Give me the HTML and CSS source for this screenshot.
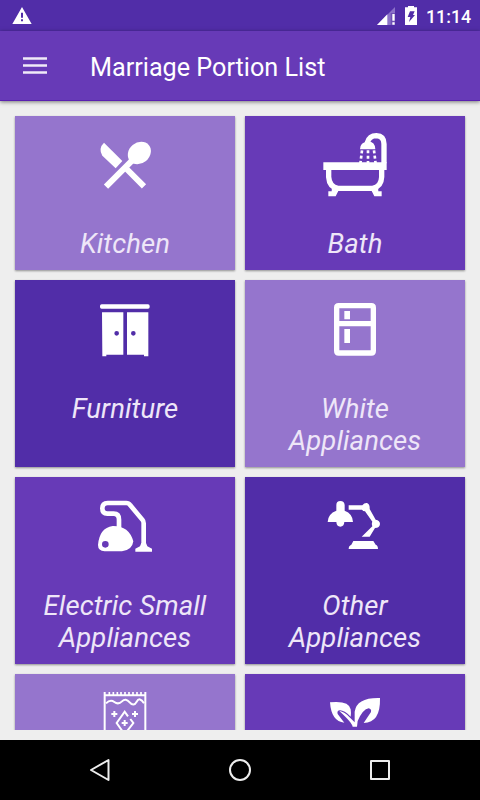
FILE: index.html
```html
<!DOCTYPE html>
<html lang="en">
<head>
<meta charset="utf-8">
<title>Marriage Portion List</title>
<link rel="stylesheet" href="styles.css">
</head>
<body>
<div class="screen">
  <div class="status">
    <svg class="warn" width="20" height="18" viewBox="0 0 60 54"><path fill="#fff" fill-rule="evenodd" d="M30 0 59 51H1ZM27 17v15h6V17ZM27 37v6h6v-6Z"/></svg>
    <svg width="18" height="18" viewBox="0 0 54 54"><path d="M54 0V54H0Z" fill="#8b70c8"/><path d="M31 22V54H0Z" fill="#fff"/><path d="M41 18h13v36H41z" fill="#6e4fb5"/><path d="M46 21h7v20h-7zM46 46h7v7h-7z" fill="#fff"/></svg>
    <svg class="battery" width="12" height="19" viewBox="0 0 36 57"><path fill="#fff" d="M9 0h18v4h9v53H0V4h9z"/><path fill="#512da8" d="M15 16h14l-5 11h6L12 48l4-15H8z"/></svg>
    <span class="clock">11:14</span>
  </div>
  <header class="appbar">
    <svg width="24" height="18" viewBox="0 0 24 18"><path d="M0 1.5h24M0 8.5h24M0 15.5h24" stroke="#f0eaf8" stroke-width="2.4"/></svg>
    <h1>Marriage Portion List</h1>
  </header>
  <main class="grid">
    <section class="card light">
      <svg viewBox="0 0 270 240"><path d="M72 68 127 123 107 145 67 107Q54 85 72 68Z"/><path d="M78 200 156 122M134 141 192 199" fill="none" stroke="#fff" stroke-width="18"/><ellipse cx="178" cy="99" rx="37" ry="31" transform="rotate(-40 178 99)"/></svg>
      <h2 class="short">Kitchen</h2>
    </section>
    <section class="card mid">
      <svg viewBox="0 0 270 240"><path d="M40 127h190v23H40zM150 88q0-21 24-24 22 2 22 24z"/><path d="M172 68Q178 47 199 47 222 48 222 72V130M56 150V171Q58 201 84 205H188Q214 200 215 171V150" fill="none" stroke="#fff" stroke-width="16"/><path d="M66 199 86 211 77 229H55V214H65ZM204 199 184 211 193 229H215V214H205Z"/><path d="M156 91 151 132M174 91v41M192 91 197 132" fill="none" stroke="#fff" stroke-width="8" stroke-dasharray="9 7"/></svg>
      <h2 class="short">Bath</h2>
    </section>
    <section class="card dark">
      <svg viewBox="0 -18 270 240"><rect x="60" y="43" width="149" height="13" rx="5"/><path fill-rule="evenodd" d="M66 67H130V194H79V199H67ZM141 67H205V199H192V194H141ZM103 130a7 7 0 1 0 14 0 7 7 0 1 0-14 0ZM153 130a7 7 0 1 0 14 0 7 7 0 1 0-14 0Z"/></svg>
      <h2>Furniture</h2>
    </section>
    <section class="card light">
      <svg viewBox="0 -18 270 240"><path fill-rule="evenodd" d="M86 39H184Q198 39 198 53V182Q198 197 184 197H86Q72 197 72 182V53Q72 39 86 39ZM88 55V93H182V55ZM88 109V181H182V109Z"/><path d="M103 63h17v25h-17zM103 117h17v42h-17z"/></svg>
      <h2>White<br>Appliances</h2>
    </section>
    <section class="card mid">
      <svg viewBox="0 -12 270 240"><path d="M117 130V104Q117 86 101 86H82Q67 86 67 70T83 54H139Q146 54 151 61L187 104Q191 108 191 115V182" fill="none" stroke="#fff" stroke-width="14"/><path fill-rule="evenodd" d="M54 180Q58 129 98 123 147 122 160 169 157 195 126 199H74Q54 198 54 180ZM66 178a10 10 0 1 0 20 0 10 10 0 1 0-20 0Z"/><path d="M184 174H198L202 184 216 191V200H166V191L180 184Z"/></svg>
      <h2>Electric Small<br>Appliances</h2>
    </section>
    <section class="card dark">
      <svg viewBox="0 -12 270 240"><path d="M79 60Q79 48 91 48T104 60V77Q128 86 129 111H103Q102 125 91 125T79 111H53Q54 86 79 77ZM116 61H157Q163 53 171 54 180 57 179 72L197 104Q210 106 210 117 209 129 195 129L179 155H155L187 124Q184 116 187 110L165 79Q159 79 156 74H116ZM130 168H190L197 179Q204 181 204 192H116Q116 182 124 179Z"/></svg>
      <h2>Other<br>Appliances</h2>
    </section>
    <section class="card light">
      <svg viewBox="0 54 270 240"><g fill="none" stroke="#fff"><path d="M74 96V300M196 96V300M74 106H196" stroke-width="6"/><path d="M88 96v10M100 96v10M112 96v10M123 96v10M135 96v10M147 96v10M159 96v10M171 96v10M183 96v10" stroke-width="5"/><path d="M78 130Q91 117 103 126T126 124 149 127 170 125 192 130M144 169 134 155 110 189 134 223 160 189 151 177M103 153v18M94 162h18M165 153v18M156 162h18M134 180v18M125 189h18" stroke-width="6"/></g></svg>
    </section>
    <section class="card mid">
      <svg viewBox="0 54 270 240"><path d="M60 127Q117 121 122 148 124 161 122 170 103 151 90 151 80 152 83 162L103 188Q64 185 60 127ZM210 114Q212 188 161 189L183 156Q185 147 176 145 159 147 143 183L141 200H128Q126 188 88 153 96 153 111 164L134 187V155Q140 112 210 114Z"/></svg>
    </section>
  </main>
  <nav class="navbar">
    <svg width="24" height="26" viewBox="0 0 24 26"><path d="M3 13 20.5 3V23Z"/></svg>
    <svg width="24" height="26" viewBox="0 0 24 26"><circle cx="12" cy="13" r="10"/></svg>
    <svg width="24" height="26" viewBox="0 0 24 26"><rect x="3" y="4" width="18" height="18"/></svg>
  </nav>
</div>
</body>
</html>
```
FILE: styles.css
```css
* { box-sizing: border-box; }
body { margin: 0; font-family: Roboto, sans-serif; color: #fff; }
.screen { width: 480px; height: 800px; display: flex; flex-direction: column; background: #eee; overflow: hidden; }
svg { display: block; flex: none; }
.status { height: 31px; flex: none; background: #512da8; display: flex; align-items: center; padding: 0 10px 0 12px; }
.warn { margin-right: auto; }
.battery { margin: 0 9px 0 10px; }
.clock { font-size: 17.8px; line-height: 31px; font-weight: 500; padding-top: 2px; width: 44px; white-space: nowrap; }
.appbar { height: 70px; flex: none; display: flex; align-items: center; padding-left: 23px; gap: 43px; background: #673ab7; border-bottom: 1px solid #5a20b0; box-shadow: 0 1px 4px rgba(0,0,0,.5); z-index: 1; }
h1 { margin: 5px 0 0; font-size: 25.2px; line-height: 32px; font-weight: 400; white-space: nowrap; }
.grid { height: 629px; flex: none; padding: 15px 15px 0; display: grid; grid-template-columns: 220px 220px; grid-template-rows: 154px 187px 187px 187px; gap: 10px; overflow: hidden; }
.card { display: flex; flex-direction: column; align-items: center; padding-top: 4px; box-shadow: 0 1px 2px rgba(0,0,0,.4); }
.card svg { width: 90px; height: 80px; fill: #fff; }
.light { background: #9575cd; }
.mid { background: #673ab7; }
.dark { background: #512da8; }
h2 { margin: 29px 0 0; font-size: 27.5px; line-height: 32px; font-weight: 400; font-style: italic; letter-spacing: .1px; text-align: center; color: #eee6f8; white-space: nowrap; }
.short { margin-top: 28px; }
.navbar { height: 60px; flex: none; margin-top: auto; background: #000; display: flex; align-items: center; justify-content: center; gap: 116px; }
.navbar svg { fill: none; stroke: #eee; stroke-width: 2; stroke-linejoin: round; }
```
